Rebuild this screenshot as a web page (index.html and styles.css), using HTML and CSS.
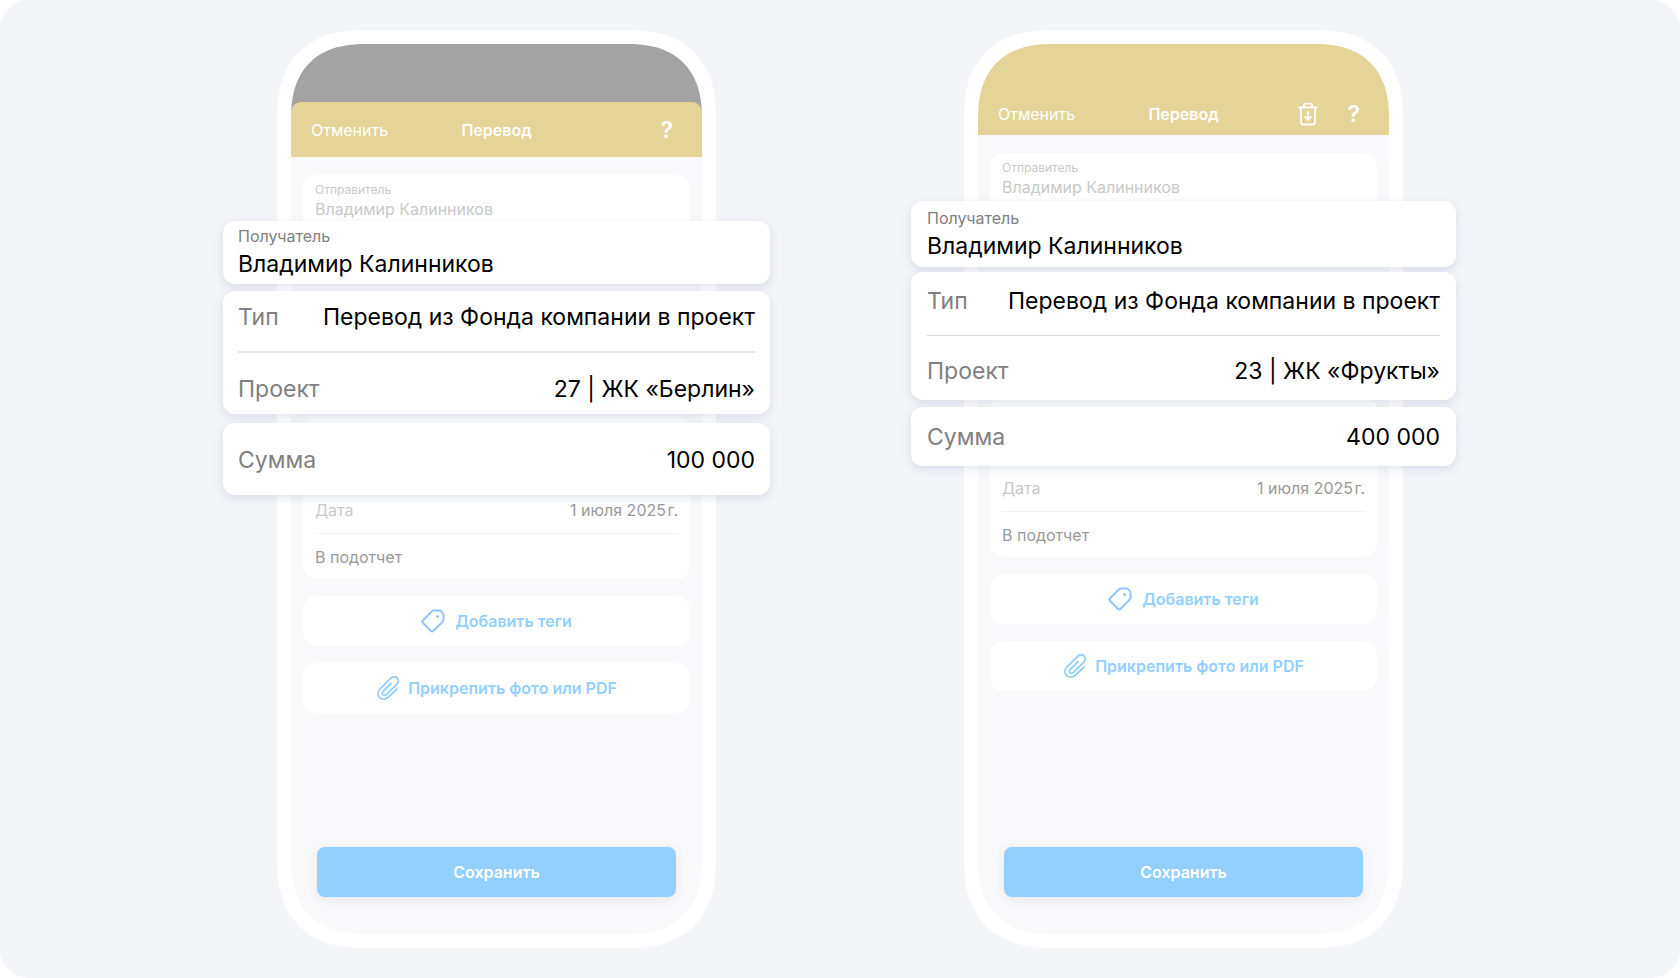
FILE: index.html
```html
<!DOCTYPE html>
<html lang="ru">
<head>
    <meta charset="UTF-8">
    <meta name="viewport" content="width=device-width, initial-scale=1.0">
    <title>Перевод</title>
    <link rel="stylesheet" href="styles.css">
</head>
<body>
    <svg class="sprite" aria-hidden="true">
        <symbol id="icon-tag" viewBox="0 0 24 24">
            <path d="M13 1.500h5.200c.8 0 1.500.3 2 .9l1.500 1.500c.6.5.8 1.200.8 2v4.700c0 .8-.3 1.500-.9 2.100l-9 9c-.8.8-2 .8-2.800 0L2.100 14c-.8-.8-.8-2 0-2.800l8.900-8.900c.5-.5 1.200-.8 2-.8z" fill="none" stroke="currentColor" stroke-width="2" stroke-linejoin="round"/>
            <circle cx="16.500" cy="7.500" r="1.500" fill="currentColor"/>
        </symbol>
        <symbol id="icon-clip" viewBox="0 0 24 24">
            <path d="M21 13l-8.500 8c-2.900 2.600-6.700 2.700-9 .4-2.300-2.400-2-6 .6-8.600l10-10c2.300-2.200 5.200-2.500 7-.8 1.700 1.800 1.400 4.600-.8 6.800l-9.600 9.300c-1.300 1.200-2.800 1.400-3.700.5s-.7-2.400.5-3.600l7.500-7.500" fill="none" stroke="currentColor" stroke-width="1.800" stroke-linecap="round" stroke-linejoin="round"/>
        </symbol>
        <symbol id="icon-trash" viewBox="0 0 24 24">
            <path d="M3 5.500h18M8 5.500v-2c0-1.100.7-1.800 1.800-1.800h4.400c1.100 0 1.800.7 1.800 1.800v2M4.700 5.500l.5 15c0 1.300.8 2 2 2h9.600c1.200 0 2-.7 2-2l.5-15M12 9.800v7.700M9 14.800l3 3 3-3" fill="none" stroke="currentColor" stroke-width="1.800" stroke-linecap="round" stroke-linejoin="round"/>
        </symbol>
    </svg>

    <main class="scene">
        <section class="phone phone-sheet">
            <div class="screen">
                <header class="navbar">
                    <button type="button" class="nav-btn">Отменить</button>
                    <h1>Перевод</h1>
                    <div class="nav-actions">
                        <button type="button" class="nav-btn help">?</button>
                    </div>
                </header>
                <div class="content">
                    <dl class="card sender">
                        <dt>Отправитель</dt>
                        <dd>Владимир Калинников</dd>
                    </dl>
                    <div class="card details">
                        <div class="detail-row">
                            <span class="muted">Дата</span>
                            <span>1 июля 2025&#8202;г.</span>
                        </div>
                        <div class="detail-row">
                            <span>В подотчет</span>
                        </div>
                    </div>
                    <button type="button" class="card add-btn">
                        <svg class="icon icon-tag"><use href="#icon-tag"/></svg>Добавить теги
                    </button>
                    <button type="button" class="card add-btn add-file">
                        <svg class="icon"><use href="#icon-clip"/></svg>Прикрепить фото или PDF
                    </button>
                    <button type="button" class="save-btn">Сохранить</button>
                </div>
            </div>

            <div class="callouts">
                <dl class="callout receiver">
                    <dt>Получатель</dt>
                    <dd>Владимир Калинников</dd>
                </dl>
                <dl class="callout target">
                    <div class="row">
                        <dt>Тип</dt>
                        <dd>Перевод из Фонда компании в проект</dd>
                    </div>
                    <div class="row">
                        <dt>Проект</dt>
                        <dd>27 | ЖК «Берлин»</dd>
                    </div>
                </dl>
                <dl class="callout amount">
                    <div class="row">
                        <dt>Сумма</dt>
                        <dd>100 000</dd>
                    </div>
                </dl>
            </div>
        </section>

        <section class="phone phone-full">
            <div class="screen">
                <header class="navbar">
                    <button type="button" class="nav-btn">Отменить</button>
                    <h1>Перевод</h1>
                    <div class="nav-actions">
                        <button type="button" class="nav-btn" aria-label="Удалить">
                            <svg class="icon"><use href="#icon-trash"/></svg>
                        </button>
                        <button type="button" class="nav-btn help">?</button>
                    </div>
                </header>
                <div class="content">
                    <dl class="card sender">
                        <dt>Отправитель</dt>
                        <dd>Владимир Калинников</dd>
                    </dl>
                    <div class="card details">
                        <div class="detail-row">
                            <span class="muted">Дата</span>
                            <span>1 июля 2025&#8202;г.</span>
                        </div>
                        <div class="detail-row">
                            <span>В подотчет</span>
                        </div>
                    </div>
                    <button type="button" class="card add-btn">
                        <svg class="icon icon-tag"><use href="#icon-tag"/></svg>Добавить теги
                    </button>
                    <button type="button" class="card add-btn add-file">
                        <svg class="icon"><use href="#icon-clip"/></svg>Прикрепить фото или PDF
                    </button>
                    <button type="button" class="save-btn">Сохранить</button>
                </div>
            </div>

            <div class="callouts">
                <dl class="callout receiver">
                    <dt>Получатель</dt>
                    <dd>Владимир Калинников</dd>
                </dl>
                <dl class="callout target">
                    <div class="row">
                        <dt>Тип</dt>
                        <dd>Перевод из Фонда компании в проект</dd>
                    </div>
                    <div class="row">
                        <dt>Проект</dt>
                        <dd>23 | ЖК «Фрукты»</dd>
                    </div>
                </dl>
                <dl class="callout amount">
                    <div class="row">
                        <dt>Сумма</dt>
                        <dd>400 000</dd>
                    </div>
                </dl>
            </div>
        </section>
    </main>
</body>
</html>
```
FILE: styles.css
```css
* {
    box-sizing: border-box;
}

body {
    margin: 0;
    background: #fff;
    font-family: Inter, "Noto Sans", sans-serif;
    font-size: 16px;
    line-height: 20px;
    color: #000;
}

h1,
dl,
dd {
    margin: 0;
}

button {
    padding: 0;
    border: none;
    background: none;
    font: inherit;
    color: inherit;
    cursor: pointer;
}

.sprite {
    display: none;
}

.icon {
    display: block;
    width: 24px;
    height: 24px;
}

.scene {
    display: flex;
    justify-content: center;
    gap: 248px;
    min-height: 100vh;
    padding: 30px 0;
    background: #f4f5f9;
    border-radius: 28px;
}

/* phone */
.phone {
    position: relative;
    display: flex;
    width: 439px;
    padding: 14px;
    background: #fff;
    border-radius: 74px;
}

.screen {
    flex: 1;
    display: flex;
    flex-direction: column;
    background: #f9f9fb;
    border-radius: 60px;
    overflow: hidden;
}

/* smoother corners where the browser has them */
@supports (corner-shape: superellipse(1.3)) {
    .phone {
        border-radius: 90px;
        corner-shape: superellipse(1.3);
    }

    .screen {
        border-radius: 76px;
        corner-shape: superellipse(1.3);
    }
}

.phone-sheet .screen {
    background: linear-gradient(#a3a3a3 120px, #f9f9fb 120px);
    padding-top: 58px;
}

.navbar {
    display: grid;
    grid-template-columns: 1fr auto 1fr;
    align-items: center;
    height: 55px;
    padding: 0 29px 0 20px;
    background: #e5d497;
    color: #fff;
}

.phone-sheet .navbar {
    border-radius: 10px 10px 0 0;
}

.phone-full .navbar {
    height: 91px;
    padding-top: 49px;
}

.navbar h1 {
    font-size: 16px;
    font-weight: 600;
    padding-left: 9px;
}

.nav-btn {
    justify-self: start;
}

.nav-actions {
    justify-self: end;
    display: flex;
    align-items: center;
    gap: 28px;
}

.help {
    font-size: 23px;
    font-weight: 600;
}

.content {
    flex: 1;
    display: flex;
    flex-direction: column;
    gap: 17px;
    padding: 18px 12px 37px;
    background: #f9f9fb;
}

.card {
    background: #fff;
    border-radius: 14px;
}

.sender {
    min-height: 99px;
    padding: 8px 12px;
    color: #c9c9c9;
}

.sender dt {
    font-size: 12px;
    line-height: 14px;
    margin-bottom: 2px;
}

.details {
    margin-top: 127px;
    padding: 69px 12px 0;
    color: #999;
}

.detail-row {
    display: flex;
    justify-content: space-between;
    padding: 13px 0;
}

.detail-row + .detail-row {
    padding-bottom: 12px;
    border-top: 1px solid #f3f3f4;
}

.muted {
    color: #c9c9c9;
}

.add-btn {
    display: flex;
    align-items: center;
    justify-content: center;
    gap: 10px;
    height: 50px;
    font-weight: 600;
    color: #93cfff;
}

.add-file {
    gap: 8px;
}

.icon-tag {
    color: #93c3ff;
}

.save-btn {
    height: 50px;
    margin: auto 14px 0;
    background: #93cfff;
    border-radius: 8px;
    box-shadow: 0 2px 12px rgba(0, 0, 0, 0.08);
    color: #fff;
    font-weight: 600;
}

/* enlarged fields over the phone */
.callouts {
    position: absolute;
    top: 191px;
    left: -54px;
    right: -54px;
    font-size: 23px;
    line-height: 30px;
}

.phone-full .callouts {
    top: 171px;
    left: -53px;
    right: -53px;
}

.callout {
    padding: 0 15px;
    background: #fff;
    border-radius: 12px;
    box-shadow: 0 3px 10px rgba(60, 75, 140, 0.14);
}

.phone-full .callout {
    padding: 0 16px;
}

.callout dt {
    color: #808080;
}

.phone-sheet .receiver {
    padding-top: 5px;
    padding-bottom: 5px;
    margin-bottom: 7px;
}

.phone-full .receiver {
    padding-top: 7px;
    padding-bottom: 6px;
    margin-bottom: 5px;
}

.receiver dt {
    font-size: 16px;
    line-height: 20px;
    margin-bottom: 3px;
}

.row {
    display: flex;
    justify-content: space-between;
}

.target {
    margin-bottom: 9px;
}

.target .row {
    padding: 11px 0 19px;
}

.target .row + .row {
    padding: 21px 0 10px;
    border-top: 2px solid #e6e6e6;
}

.phone-full .target {
    margin-bottom: 7px;
}

.phone-full .target .row {
    padding: 14px 0 19px;
}

.phone-full .target .row + .row {
    padding: 20px 0 14px;
    border-top: 1px solid #d9d9d9;
}

.amount .row {
    padding: 22px 0 20px;
}

.phone-full .amount .row {
    padding: 15px 0 14px;
}
```
